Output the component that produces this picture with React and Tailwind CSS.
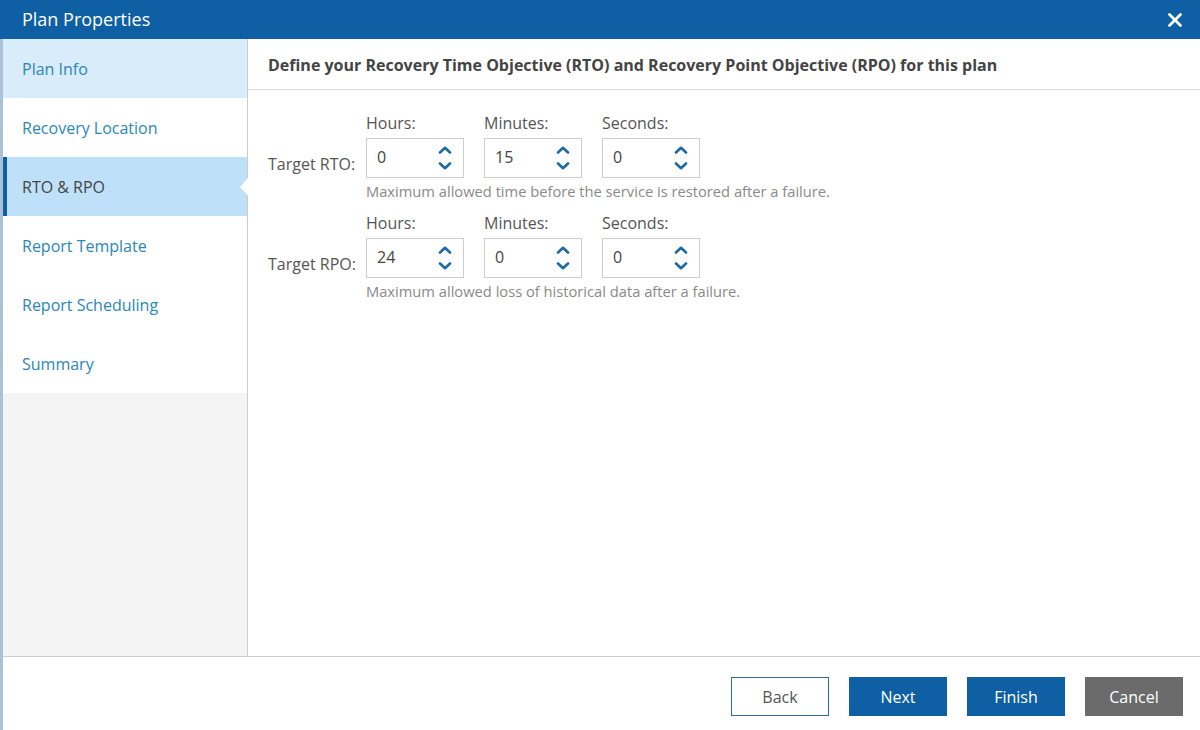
import { X } from 'lucide-react';

const steps = ['Plan Info', 'Recovery Location', 'RTO & RPO', 'Report Template', 'Report Scheduling', 'Summary'];
const units = ['Hours:', 'Minutes:', 'Seconds:'];

function Spinner({ value }) {
  return (
    <div className="w-[98px] h-[40px] border border-[#cfcfcf] bg-white flex items-center justify-between pl-[10px] pr-[11px]">
      <span className="text-[16px] text-[#444] -mt-[2px]">{value}</span>
      <div className="flex flex-col items-center gap-[8px]">
        <svg width="14" height="8" viewBox="0 0 14 8" fill="none">
          <path d="M2 6.5 L7 1.8 L12 6.5" stroke="#1c6aa8" strokeWidth="2.6" strokeLinecap="round" strokeLinejoin="round" />
        </svg>
        <svg width="14" height="8" viewBox="0 0 14 8" fill="none">
          <path d="M2 1.5 L7 6.2 L12 1.5" stroke="#1c6aa8" strokeWidth="2.6" strokeLinecap="round" strokeLinejoin="round" />
        </svg>
      </div>
    </div>
  );
}

function TimeRow({ label, values, help }) {
  return (
    <div className="flex">
      <div className="w-[98px] pt-[25px] flex items-center h-[65px]">
        <span className="text-[16px] text-[#555] mt-[12px]">{label}</span>
      </div>
      <div>
        <div className="flex gap-[20px]">
          {units.map((h, i) => (
            <div key={h}>
              <div className="text-[16px] text-[#555] h-[25px] leading-[20px]">{h}</div>
              <Spinner value={values[i]} />
            </div>
          ))}
        </div>
        <div className="text-[14.7px] text-[#8a8a8a] mt-[2px]">{help}</div>
      </div>
    </div>
  );
}

export default function App() {
  return (
    <div className="w-[1200px] h-[730px] flex flex-col bg-white overflow-hidden" style={{ fontFamily: '"Open Sans", "Noto Sans", sans-serif' }}>
      <div className="h-[39px] bg-[#0e5fa3] flex items-center justify-between pl-[22px] pr-[14px] shrink-0">
        <span className="text-[18px] text-white">Plan Properties</span>
        <X className="text-white" size={22} strokeWidth={3} />
      </div>
      <div className="flex-1 flex border-l-[3px] border-[#a9c3d6] min-h-0">
        <div className="flex-1 flex flex-col">
          <div className="flex flex-1 min-h-0 border-b border-[#cccccc]">
            <div className="w-[245px] bg-[#f4f4f4] border-r border-[#cccccc] flex flex-col">
              {steps.map((s, i) => {
                const active = i === 2;
                const done = i === 0;
                return (
                  <div
                    key={s}
                    className={
                      'relative h-[59px] flex items-center text-[16px] ' +
                      (active
                        ? 'bg-[#bfe0f9] text-[#444] border-l-[4px] border-[#0e5fa3] pl-[15px]'
                        : done
                        ? 'bg-[#d9ecfa] text-[#2b87b6] pl-[19px]'
                        : 'bg-white text-[#2b87b6] pl-[19px]')
                    }
                  >
                    {s}
                    {active && (
                      <div className="absolute right-[-1px] top-[21px] w-0 h-0 border-y-[9px] border-y-transparent border-r-[8px] border-r-white" />
                    )}
                  </div>
                );
              })}
            </div>
            <div className="flex-1 flex flex-col">
              <div className="h-[51px] border-b border-[#dddddd] flex items-center pl-[20px] pt-[1px]">
                <span className="text-[16px] font-bold text-[#444]">
                  Define your Recovery Time Objective (RTO) and Recovery Point Objective (RPO) for this plan
                </span>
              </div>
              <div className="pl-[20px] pt-[23px] flex flex-col gap-[11px]">
                <TimeRow label="Target RTO:" values={['0', '15', '0']} help="Maximum allowed time before the service is restored after a failure." />
                <TimeRow label="Target RPO:" values={['24', '0', '0']} help="Maximum allowed loss of historical data after a failure." />
              </div>
            </div>
          </div>
          <div className="h-[73px] flex items-center justify-end gap-[20px] pr-[17px] shrink-0 pt-[6px]">
            <button className="w-[98px] h-[39px] border border-[#2e6f98] bg-white text-[#555] text-[16px]">Back</button>
            <button className="w-[98px] h-[39px] bg-[#0e5fa3] text-white text-[16px]">Next</button>
            <button className="w-[98px] h-[39px] bg-[#0e5fa3] text-white text-[16px]">Finish</button>
            <button className="w-[98px] h-[39px] bg-[#6b6b6b] text-white text-[16px]">Cancel</button>
          </div>
        </div>
      </div>
    </div>
  );
}
